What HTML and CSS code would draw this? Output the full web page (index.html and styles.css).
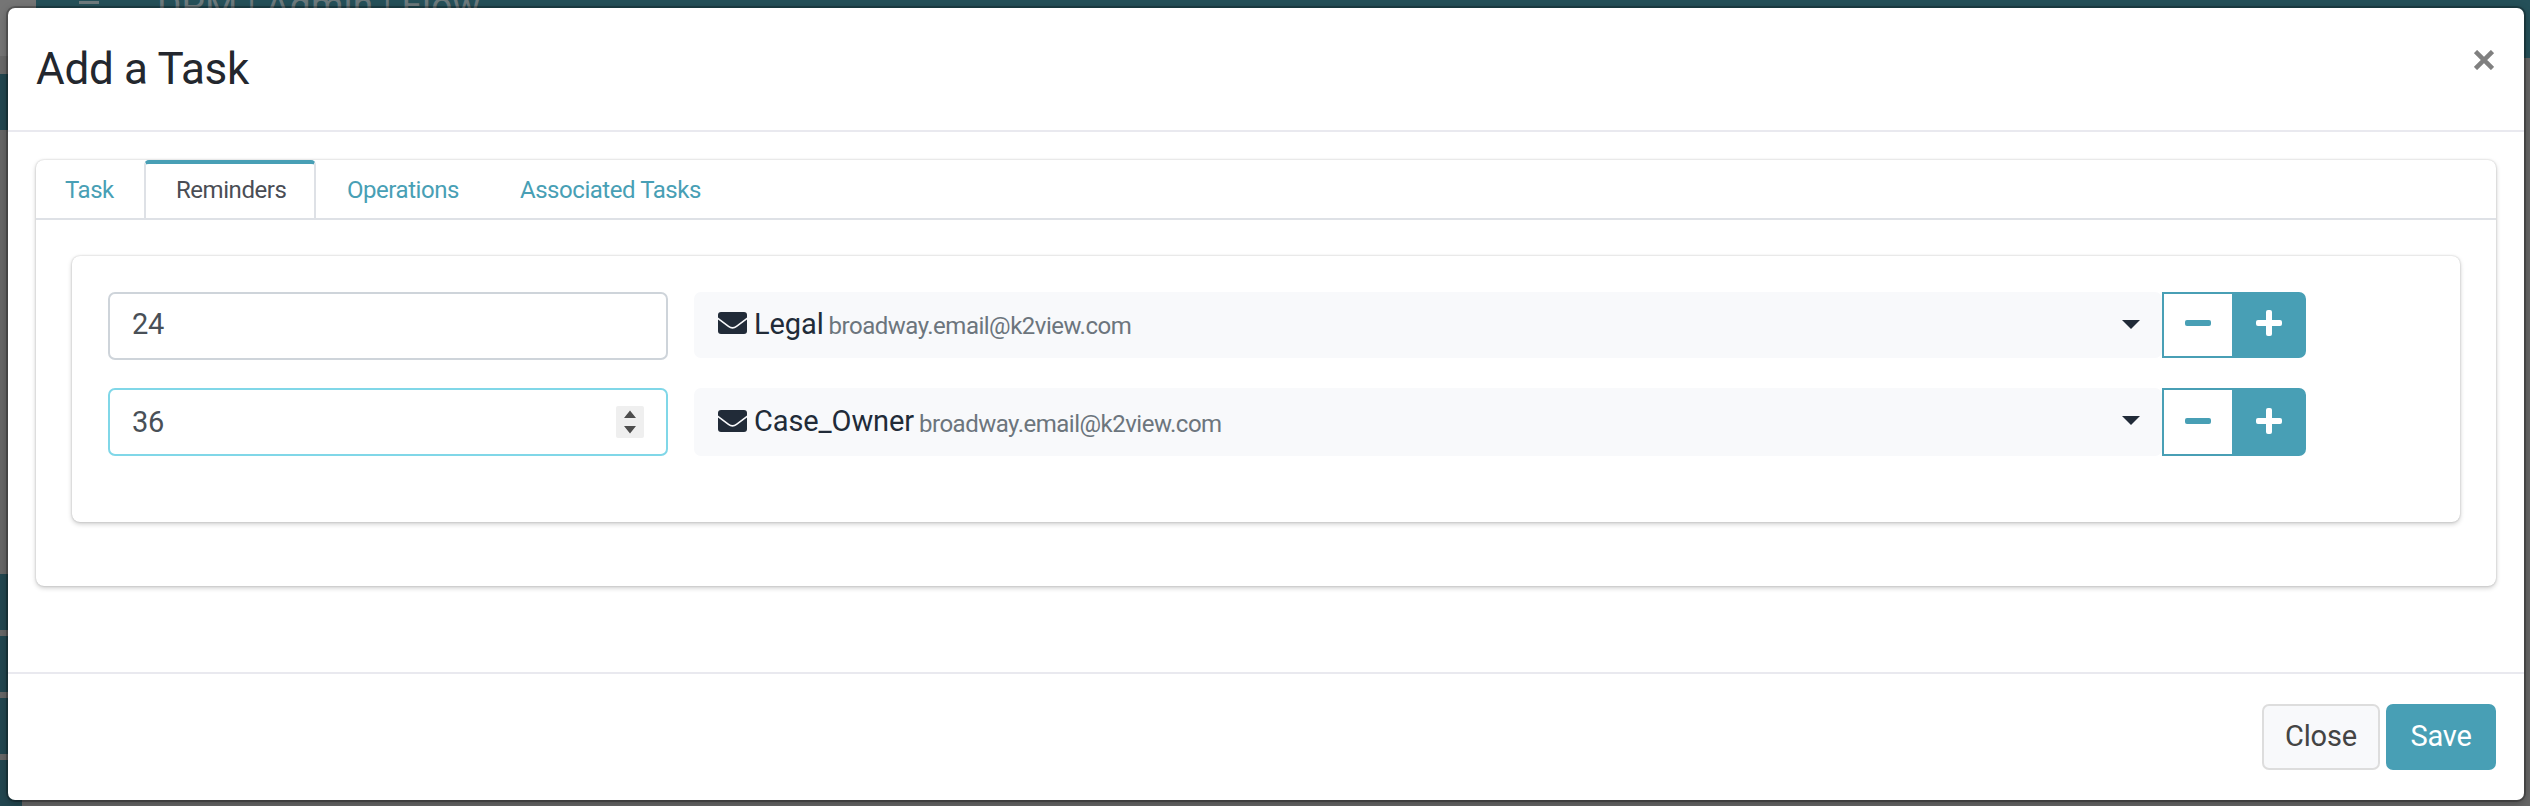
FILE: index.html
```html
<!DOCTYPE html>
<html lang="en">
<head>
<meta charset="utf-8">
<title>Add a Task</title>
<link rel="stylesheet" href="styles.css">
</head>
<body>
<div class="page">
  <aside class="rail">
    <div class="rail-head"></div>
    <div class="rail-block first"></div>
    <div class="rail-gap"></div>
    <div class="rail-block"></div>
    <div class="rail-block"></div>
    <div class="rail-block"></div>
    <div class="rail-block"></div>
  </aside>
  <header class="topbar">
    <span class="burger"></span>
    <span class="crumb">DPM | Admin | Flow</span>
  </header>
</div>
<section class="modal">
  <header class="modal-header">
    <h1>Add a Task</h1>
    <svg class="close-x" viewBox="0 0 20 20"><path d="M1.5 1.5 18.5 18.5M18.5 1.5 1.5 18.5"/></svg>
  </header>
  <main class="modal-body">
    <div class="card">
      <nav class="tabs">
        <a class="tab">Task</a>
        <a class="tab active">Reminders</a>
        <a class="tab">Operations</a>
        <a class="tab">Associated Tasks</a>
      </nav>
      <div class="panel">
        <div class="row">
          <div class="field">24</div>
          <div class="select">
            <svg class="mail" viewBox="0 0 29 22"><rect width="29" height="22" rx="3"/><path d="M-.5 6 10.5 14.300Q14.500 17.500 18.500 14.300L29.500 6"/></svg>
            <span class="name">Legal</span><span class="email">broadway.email@k2view.com</span>
            <span class="caret"></span>
          </div>
          <button class="minus"><svg viewBox="0 0 26 26"><rect y="10" width="26" height="6" rx="2"/></svg></button>
          <button class="plus"><svg viewBox="0 0 26 26"><rect y="10" width="26" height="6" rx="2"/><rect x="10" width="6" height="26" rx="2"/></svg></button>
        </div>
        <div class="row second">
          <div class="field focus">36
            <svg class="spin" viewBox="0 0 28 32"><path d="M8 12 14 4.500 20 12ZM8 20 14 27.500 20 20Z"/></svg>
          </div>
          <div class="select">
            <svg class="mail" viewBox="0 0 29 22"><rect width="29" height="22" rx="3"/><path d="M-.5 6 10.5 14.300Q14.500 17.500 18.500 14.300L29.500 6"/></svg>
            <span class="name">Case_Owner</span><span class="email">broadway.email@k2view.com</span>
            <span class="caret"></span>
          </div>
          <button class="minus"><svg viewBox="0 0 26 26"><rect y="10" width="26" height="6" rx="2"/></svg></button>
          <button class="plus"><svg viewBox="0 0 26 26"><rect y="10" width="26" height="6" rx="2"/><rect x="10" width="6" height="26" rx="2"/></svg></button>
        </div>
      </div>
    </div>
  </main>
  <footer class="modal-footer">
    <button class="btn btn-light">Close</button>
    <button class="btn btn-primary">Save</button>
  </footer>
</section>
</body>
</html>
```
FILE: styles.css
```css
* { box-sizing: border-box; }
body { margin: 0; width: 2530px; height: 806px; overflow: hidden; font-family: Roboto, sans-serif; background: #666; }
.page { display: flex; height: 806px; overflow: hidden; }
.rail { width: 36px; display: flex; flex-direction: column; flex: none; }
.rail-head { height: 74px; flex: none; background: #757575; border-bottom: 18px solid #696969; }
.rail-block { width: 22px; height: 56px; flex: none; background: #22464f; margin-bottom: 6px; }
.rail-block.first { margin: 0; }
.rail-gap { height: 444px; flex: none; }
.topbar { flex: 1; height: 58px; background: #255059; display: flex; color: #6d7a7d; }
.burger { width: 20px; height: 8px; border-top: 3px solid #6d7a7d; border-bottom: 1px solid #6d7a7d; margin: 1px 0 0 43px; }
.crumb { font-size: 37px; line-height: 38px; margin: -13px 0 0 58px; letter-spacing: .2px; }
.modal { position: absolute; left: 8px; top: 8px; width: 2516px; height: 792px; background: #fff; border-radius: 7px; display: flex; flex-direction: column; box-shadow: 0 0 0 2px rgba(0,0,0,.22), 0 2px 8px rgba(0,0,0,.35); }
.modal-header { height: 124px; border-bottom: 2px solid #e9e9ef; padding: 0 28px; display: flex; justify-content: space-between; }
h1 { margin: 33px 0 0; font-size: 44px; line-height: 56px; font-weight: 400; letter-spacing: -.3px; color: #23272e; }
.close-x { width: 20px; height: 20px; margin: 42px 2px 0 0; stroke: #808080; stroke-width: 4.5; fill: none; }
.modal-body { flex: 1; padding: 28px; }
.card { height: 426px; border-radius: 8px; box-shadow: 0 0 2px rgba(0,0,0,.22), 0 2px 5px rgba(0,0,0,.2); }
.tabs { display: flex; height: 60px; border-bottom: 2px solid #dee1e6; font-size: 24px; letter-spacing: -.45px; line-height: 57px; color: #489fb5; }
.tab { padding: 2px 30px 0 31px; }
.tab:first-child { width: 108px; padding: 2px 0 0 29px; }
.tab.active { width: 172px; height: 60px; background: #fff; padding: 0 0 0 30px; line-height: 53px; border: 2px solid #dee1e6; border-top: 4px solid #489fb5; border-bottom: 2px solid #dee1e6; border-radius: 5px 5px 0 0; color: #4a4d55; }
.panel { margin: 36px; height: 266px; border-radius: 8px; padding: 36px; box-shadow: 0 0 2px rgba(0,0,0,.22), 0 2px 5px rgba(0,0,0,.2); }
.row { display: flex; height: 66px; margin-bottom: 30px; font-size: 29px; letter-spacing: -.1px; }
.row.second { height: 68px; }
.field { width: 560px; height: 68px; border: 2px solid #ced4da; border-radius: 7px; padding: 0 22px; line-height: 61px; color: #495057; letter-spacing: -.3px; margin-right: 26px; display: flex; justify-content: space-between; }
.field.focus { border-color: #80d7e8; line-height: 65px; }
.spin { width: 28px; height: 32px; background: #efefef; fill: #4d4d4d; margin-top: 16px; border-radius: 2px; }
.select { width: 1468px; background: #f8f9fb; border-radius: 7px; display: flex; color: #212b38; line-height: 64px; padding-left: 24px; }
.mail { width: 29px; height: 22px; margin: 20px 7px 0 0; fill: #212b38; }
.mail path { fill: none; stroke: #f8f9fb; stroke-width: 1.6; }
.email { font-size: 24px; line-height: 68px; color: #6c757d; margin-left: 5px; letter-spacing: -.5px; }
.caret { width: 18px; height: 9px; margin: 28px 22px 0 auto; background: #212b38; clip-path: polygon(0 0, 100% 0, 50% 100%); }
.second .select { line-height: 67px; }
.second .email { line-height: 72px; }
.second .mail { margin-top: 22px; }
.minus, .plus { width: 72px; border: 2px solid #489fb5; padding: 18px 0 0 21px; background: #fff; fill: #489fb5; display: flex; align-items: flex-start; }
.minus svg, .plus svg { width: 26px; height: 26px; margin-top: -2px; flex: none; }
.plus { padding-left: 20px; background: #489fb5; fill: #fff; border-radius: 0 7px 7px 0; }
.second .minus, .second .plus { padding-top: 20px; }
.modal-footer { height: 128px; border-top: 2px solid #e9e9ef; display: flex; justify-content: flex-end; padding: 30px 28px; gap: 6px; }
.btn { height: 66px; width: 118px; border: 2px solid #ddd; border-radius: 7px; font: 29px/60px Roboto, sans-serif; padding: 0 0 2px; background: #f8f9fb; color: #444; letter-spacing: -.2px; }
.btn-primary { width: 110px; background: #489fb5; border-color: #489fb5; color: #fff; }
```
